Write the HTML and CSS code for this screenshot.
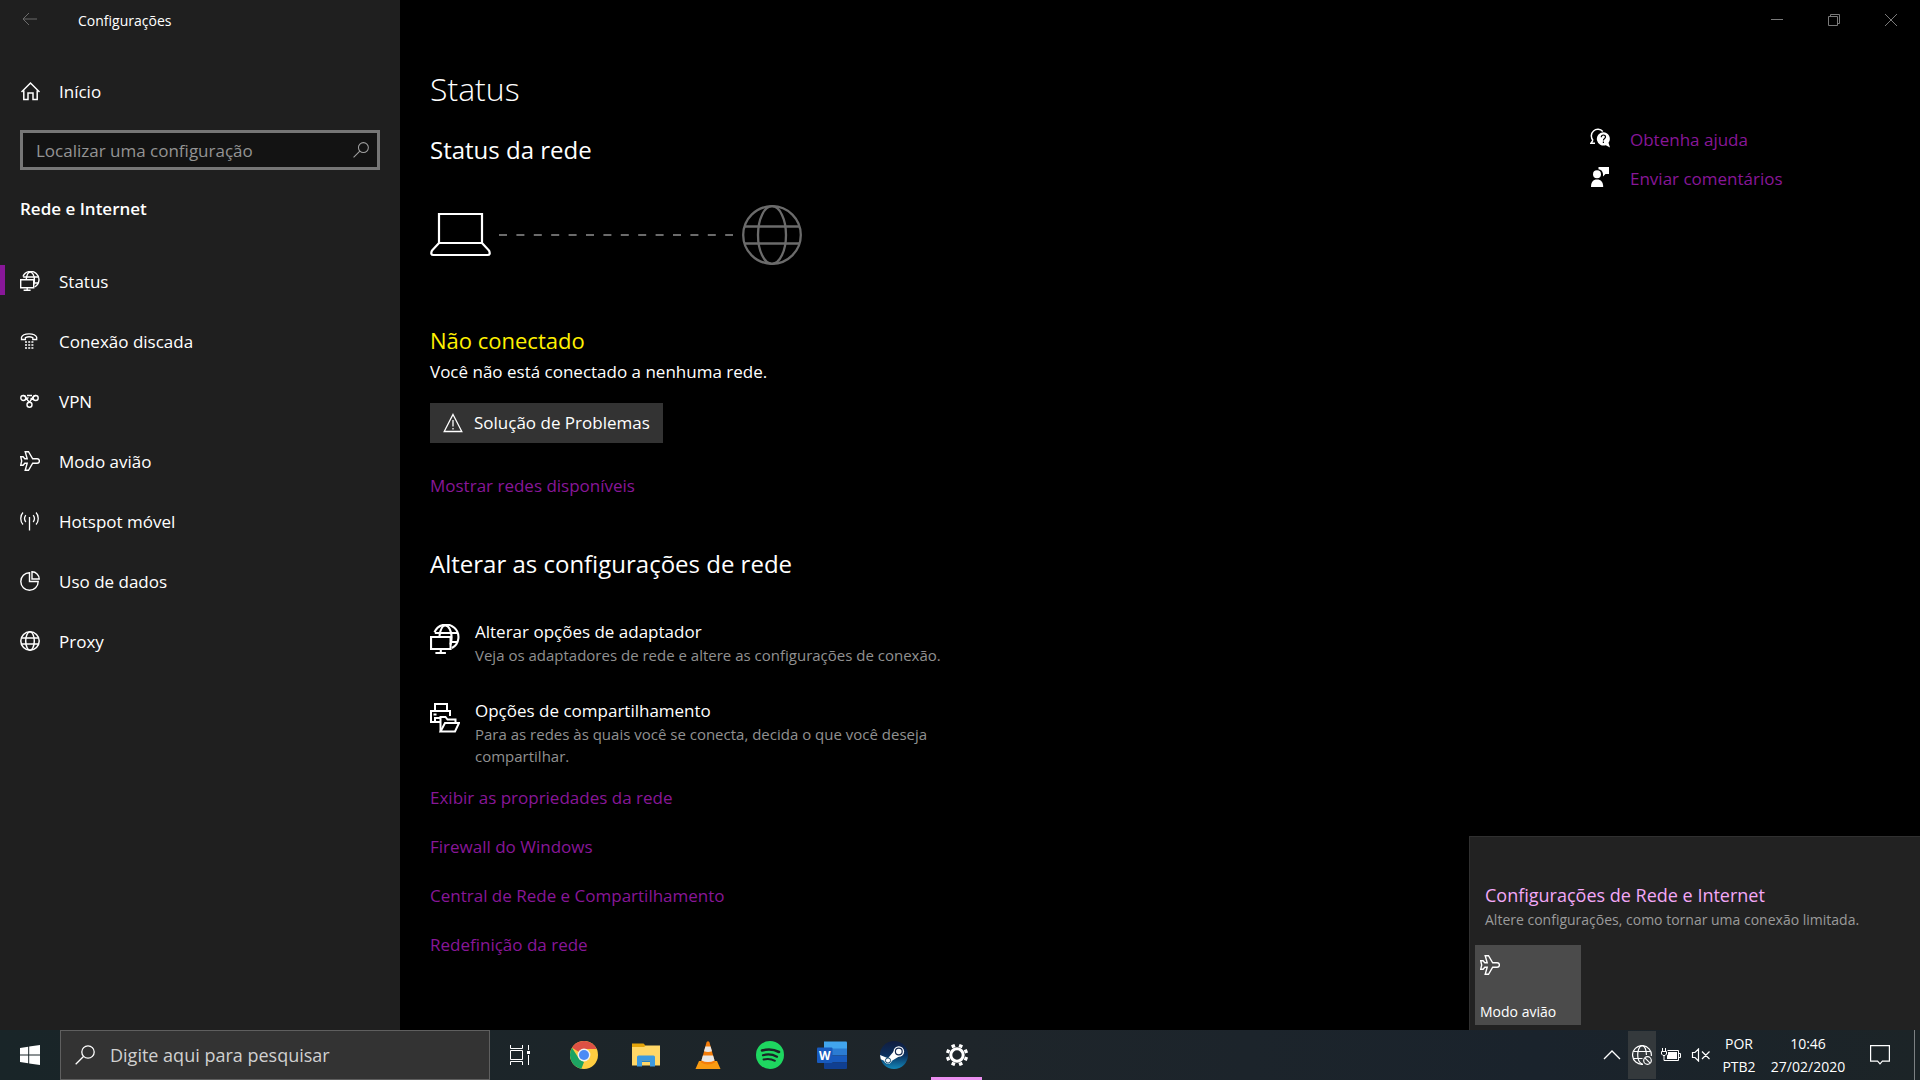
FILE: index.html
```html
<!DOCTYPE html>
<html lang="pt-BR">
<head>
    <meta charset="UTF-8">
    <meta name="viewport" content="width=device-width, initial-scale=1.0">
    <title>Configurações</title>
    <link rel="stylesheet" href="styles.css">
</head>
<body>
    <!-- Ícones usados mais de uma vez -->
    <svg class="sprite" aria-hidden="true">
        <symbol id="icon-globe" viewBox="0 0 20 20">
            <g fill="none" stroke="currentColor" stroke-width="1.5">
                <circle cx="10" cy="10" r="9.2"/>
                <ellipse cx="10" cy="10" rx="4.3" ry="9.2"/>
                <path d="M1.5 7h17M1.5 13h17"/>
            </g>
        </symbol>
        <symbol id="icon-network" viewBox="0 0 20 20">
            <g fill="none" stroke="currentColor" stroke-width="1.4">
                <path d="M3 5.500A8.300 8.300 0 1 1 14.600 16"/>
                <path d="M6.300 8C6.800 4.300 8 1 10.200 1s4.200 3.500 4.200 7.800c0 2-.3 3.700-.8 5"/>
                <path d="M3.200 6h14.800M14.300 12h4"/>
                <path d="M.7 8.700h13v8H.7zM7.200 17v2.300M3.600 19.300h7"/>
            </g>
        </symbol>
        <symbol id="icon-plane" viewBox="0 0 20 20">
            <path d="M5.200 .7h3.300l4.200 7.100h4.500a2.200 2.200 0 0 1 0 4.400h-4.500L8.500 19.300H5.200l2-7.100H4.800l-1.700 2.100H.7L1.700 10 .7 5.700h2.400l1.700 2.100h2.400z" fill="none" stroke="currentColor" stroke-width="1.4"/>
        </symbol>
        <symbol id="icon-search" viewBox="0 0 20 20">
            <g fill="none" stroke="currentColor" stroke-width="1.3">
                <circle cx="13" cy="7" r="6.200"/>
                <path d="M8.500 11.500L.7 19.300"/>
            </g>
        </symbol>
    </svg>

    <div class="window">
        <aside class="sidebar">
            <div class="title-bar">
                <button class="back-btn" aria-label="Voltar">
                    <svg width="16" height="14" viewBox="0 0 16 14"><path d="M15 7H1M7 1L1 7l6 6" fill="none" stroke="currentColor"/></svg>
                </button>
                <span class="window-title">Configurações</span>
            </div>
            <a href="#" class="nav-item home">
                <svg class="nav-icon" viewBox="0 0 20 20"><path d="M1.500 11L10.500 2 19.500 11M3.800 9.500V18.500H8V12h5v6.500h4.200V9.500" fill="none" stroke="currentColor" stroke-width="1.500"/></svg>
                <span>Início</span>
            </a>
            <div class="search-box">
                <input type="text" placeholder="Localizar uma configuração" aria-label="Localizar uma configuração">
                <svg class="search-icon"><use href="#icon-search"/></svg>
            </div>
            <h2 class="nav-heading">Rede e Internet</h2>
            <nav class="nav">
                <a href="#" class="nav-item active">
                    <svg class="nav-icon"><use href="#icon-network"/></svg>
                    <span>Status</span>
                </a>
                <a href="#" class="nav-item">
                    <svg class="nav-icon" viewBox="0 0 20 20">
                        <path d="M1.500 8.500V6.300C3 1.800 15 1.800 16.700 6.300v2.200h-3.900V6.700c-2-1-5.400-1-7.400 0v1.800z" fill="none" stroke="currentColor" stroke-width="1.300"/>
                        <path d="M5 11h2M8.200 11h2M11.400 11h2M5 14h2M8.200 14h2M11.400 14h2M5 17h2M8.200 17h2M11.400 17h2" stroke="currentColor" stroke-width="1.300"/>
                    </svg>
                    <span>Conexão discada</span>
                </a>
                <a href="#" class="nav-item">
                    <svg class="nav-icon" viewBox="0 0 20 20">
                        <g fill="none" stroke="currentColor" stroke-width="1.400">
                            <circle cx="3.300" cy="7" r="2.500"/>
                            <circle cx="15.700" cy="7" r="2.500"/>
                            <circle cx="9.500" cy="13.700" r="2.500"/>
                            <path d="M3.300 4.500c3 0 3.200 5 6.200 6.700M15.700 4.500c-4 0-4 6.500-7.700 7.200M5.500 8.700L8.500 6.500M13.500 8.700l-3-1.200M7 4.500h5"/>
                        </g>
                    </svg>
                    <span>VPN</span>
                </a>
                <a href="#" class="nav-item">
                    <svg class="nav-icon"><use href="#icon-plane"/></svg>
                    <span>Modo avião</span>
                </a>
                <a href="#" class="nav-item">
                    <svg class="nav-icon" viewBox="0 0 20 20">
                        <g fill="none" stroke="currentColor" stroke-width="1.300">
                            <path d="M3 1.500C0 4.500 0 10.500 3 13.500M16 1.500c3 3 3 9 0 12M5.800 4.200c-1.500 2-1.500 4.800 0 6.800M13.200 4.200c1.500 2 1.500 4.800 0 6.800"/>
                            <path d="M9.500 6v13.500"/>
                        </g>
                    </svg>
                    <span>Hotspot móvel</span>
                </a>
                <a href="#" class="nav-item">
                    <svg class="nav-icon" viewBox="0 0 20 20">
                        <g fill="none" stroke="currentColor" stroke-width="1.400">
                            <path d="M9.500 1.800A8.700 8.700 0 1 0 18.200 10.500H9.500z"/>
                            <path d="M12 .8v7.200h7.200A7.200 7.200 0 0 0 12 .8z"/>
                        </g>
                    </svg>
                    <span>Uso de dados</span>
                </a>
                <a href="#" class="nav-item">
                    <svg class="nav-icon"><use href="#icon-globe"/></svg>
                    <span>Proxy</span>
                </a>
            </nav>
        </aside>

        <main class="main">
            <div class="window-controls">
                <button aria-label="Minimizar"><svg width="12" height="12" viewBox="0 0 12 12"><path d="M0 5.500h12" stroke="currentColor"/></svg></button>
                <button aria-label="Restaurar"><svg width="12" height="12" viewBox="0 0 12 12"><path d="M.5 2.500h9v9h-9zM2.500 2.500v-2h9v9h-2" fill="none" stroke="currentColor"/></svg></button>
                <button aria-label="Fechar"><svg width="12" height="12" viewBox="0 0 12 12"><path d="M0 0l12 12M12 0L0 12" stroke="currentColor"/></svg></button>
            </div>
            <div class="columns">
                <div class="content">
                    <h1>Status</h1>
                    <h2>Status da rede</h2>
                    <div class="diagram">
                        <svg class="laptop" width="62" height="44" viewBox="0 0 62 44">
                            <path d="M9 1h43v29H9zM9 30L2 37.500Q0 42 3.500 42h54Q61 42 59 37.500L52 30" fill="none" stroke="currentColor" stroke-width="2.200"/>
                        </svg>
                        <svg class="dashes" width="234" height="2" viewBox="0 0 234 2"><path d="M0 1h234" stroke="currentColor" stroke-width="2" stroke-dasharray="8 9.400"/></svg>
                        <svg class="globe" width="60" height="60" viewBox="0 0 60 60">
                            <g fill="none" stroke="currentColor" stroke-width="2.300">
                                <circle cx="30" cy="30" r="28.800"/>
                                <ellipse cx="30" cy="30" rx="14" ry="28.800"/>
                                <path d="M2.500 21.500h55M2.500 38.500h55"/>
                            </g>
                        </svg>
                    </div>
                    <h3>Não conectado</h3>
                    <p class="status-text">Você não está conectado a nenhuma rede.</p>
                    <button class="troubleshoot-btn">
                        <svg width="20" height="20" viewBox="0 0 20 20"><path d="M10 1.500L18.800 18.500H1.200zM10 7v6.500M10 15v1.500" fill="none" stroke="currentColor" stroke-width="1.300"/></svg>
                        Solução de Problemas
                    </button>
                    <a href="#" class="link">Mostrar redes disponíveis</a>

                    <h2 class="change-heading">Alterar as configurações de rede</h2>
                    <a href="#" class="option">
                        <svg class="option-icon"><use href="#icon-network"/></svg>
                        <span class="option-text">
                            <span class="option-title">Alterar opções de adaptador</span>
                            <span class="option-desc">Veja os adaptadores de rede e altere as configurações de conexão.</span>
                        </span>
                    </a>
                    <a href="#" class="option">
                        <svg class="option-icon" viewBox="0 0 30 30">
                            <g fill="none" stroke="currentColor" stroke-width="2">
                                <path d="M5 8V1h12v7M10 19H1V8h19v5"/>
                                <path d="M5 19v-4h6M3.500 11.500h3"/>
                                <path d="M10.500 28.500V14h5l2 2.500h8V20"/>
                                <path d="M10.500 28.500L15 20h14l-4 8.500z"/>
                            </g>
                        </svg>
                        <span class="option-text">
                            <span class="option-title">Opções de compartilhamento</span>
                            <span class="option-desc">Para as redes às quais você se conecta, decida o que você deseja compartilhar.</span>
                        </span>
                    </a>
                    <div class="link-list">
                        <a href="#" class="link">Exibir as propriedades da rede</a>
                        <a href="#" class="link">Firewall do Windows</a>
                        <a href="#" class="link">Central de Rede e Compartilhamento</a>
                        <a href="#" class="link">Redefinição da rede</a>
                    </div>
                </div>
                <div class="help">
                    <a href="#" class="help-link">
                        <svg width="20" height="20" viewBox="0 0 20 20">
                            <path d="M3 12.200A6.200 6.200 0 1 1 12.800 3.500M3 12.200L.8 15.300H5" fill="none" stroke="#fff" stroke-width="1.500"/>
                            <path d="M13.200 4.200a6.600 6.600 0 0 1 5.300 10.500l1.500 4.800-4.200-2.300A6.700 6.700 0 1 1 13.200 4.200z" fill="#fff"/>
                            <path d="M11.300 9.200c0-3 4.200-2.800 4.200-.3 0 1.600-2.100 1.700-2.100 3.600M13.400 13.500v1.500" fill="none" stroke="#000" stroke-width="1.200"/>
                        </svg>
                        Obtenha ajuda
                    </a>
                    <a href="#" class="help-link">
                        <svg width="20" height="20" viewBox="0 0 20 20" fill="#fff">
                            <path d="M8.500 0H19v7h-3.500L13 9.500V7C12.500 4 11 2.500 8.500 2.300z"/>
                            <circle cx="7" cy="7.300" r="4"/>
                            <path d="M1 20c0-5 2-7.500 6-7.500s6.200 2.500 6.200 7.500z"/>
                        </svg>
                        Enviar comentários
                    </a>
                </div>
            </div>
        </main>

        <!-- Painel de rede aberto pela bandeja -->
        <section class="flyout">
            <a href="#" class="flyout-link">Configurações de Rede e Internet</a>
            <p>Altere configurações, como tornar uma conexão limitada.</p>
            <button class="tile">
                <svg><use href="#icon-plane"/></svg>
                Modo avião
            </button>
        </section>
    </div>

    <footer class="taskbar">
        <button class="start-btn" aria-label="Iniciar">
            <svg width="20" height="20" viewBox="0 0 20 20" fill="#fff"><path d="M0 2.900l8.200-1.200v7.800H0zM9.200 1.500L20 0v9.500H9.200zM0 10.500h8.200v7.800L0 17.100zM9.200 10.500H20V20L9.200 18.500z"/></svg>
        </button>
        <div class="task-search">
            <svg><use href="#icon-search"/></svg>
            <input type="text" placeholder="Digite aqui para pesquisar" aria-label="Digite aqui para pesquisar">
        </div>
        <button class="app task-view" aria-label="Visão de tarefas">
            <svg width="20" height="20" viewBox="0 0 20 20"><path d="M.5 0v3.500h12V0M.5 5.500h12v9H.5zM.5 20v-3.500h12V20M18.500 0v5M18.500 10v10" fill="none" stroke="#fff"/><path d="M17 6h3v3h-3z" fill="#fff"/></svg>
        </button>
        <div class="apps">
            <button class="app" aria-label="Google Chrome">
                <svg width="28" height="28" viewBox="0 0 28 28">
                    <circle cx="14" cy="14" r="14" fill="#ffcd41"/>
                    <path d="M14 14L2 6.800A14 14 0 0 1 26.600 8H14z" fill="#dd5144"/>
                    <path d="M2 6.800L8.700 17.200 14 21l-2.600 6.800A14 14 0 0 1 2 6.800z" fill="#1da462"/>
                    <circle cx="14" cy="14" r="6.400" fill="#f1f1f1"/>
                    <circle cx="14" cy="14" r="5" fill="#4c8bf5"/>
                </svg>
            </button>
            <button class="app" aria-label="Explorador de Arquivos">
                <svg width="28" height="28" viewBox="0 0 28 28">
                    <path d="M0 2.500h11.500l2 2V9H0z" fill="#e5a50a"/>
                    <path d="M0 6h12l1.800-1.500H28V24.500H0z" fill="#ffd767"/>
                    <path d="M5 25.500V16q0-1.500 1.500-1.500h15q1.500 0 1.500 1.500v9.500h-5v-6h-8v6z" fill="#3c9ae0"/>
                    <path d="M10 19.500h8v1.500h-8z" fill="#257fc4"/>
                </svg>
            </button>
            <button class="app" aria-label="VLC">
                <svg width="28" height="28" viewBox="0 0 28 28">
                    <path d="M5 20h18l3.500 8h-25z" fill="#f99b12"/>
                    <path d="M12.600 1q1.400-1.500 2.800 0l5.600 20.500q-7 4-14 0z" fill="#f47d09"/>
                    <path d="M11.400 5.500h5.200l1.400 4.700q-4 1.500-8 0zM8.900 14.500h10.200l1.500 5q-6.600 3-13.200 0z" fill="#e8e8e8"/>
                </svg>
            </button>
            <button class="app" aria-label="Spotify">
                <svg width="28" height="28" viewBox="0 0 28 28">
                    <circle cx="14" cy="14" r="14" fill="#1ed760"/>
                    <g fill="none" stroke="#1b2427" stroke-linecap="round"><path d="M6 9.500q9.500-2.500 17 1.500" stroke-width="2.600"/><path d="M7 14.200q7.500-2 14 1.500" stroke-width="2.200"/><path d="M7.500 18.500q6.500-1.500 11.500 1.400" stroke-width="1.800"/></g>
                </svg>
            </button>
            <button class="app" aria-label="Word">
                <svg width="30" height="28" viewBox="0 0 30 28">
                    <path d="M7 .5h22a1 1 0 0 1 1 1V8H7z" fill="#41a5ee"/>
                    <path d="M7 7.500h23v7H7z" fill="#2b7cd3"/>
                    <path d="M7 14.500h23v7H7z" fill="#185abd"/>
                    <path d="M7 21.500h23V27a1 1 0 0 1-1 1H8a1 1 0 0 1-1-1z" fill="#103f91"/>
                    <rect y="6.500" width="15.500" height="15.500" rx="1" fill="#185abd"/>
                    <text x="7.700" y="18.500" class="word-letter">W</text>
                </svg>
            </button>
            <button class="app" aria-label="Steam">
                <svg width="28" height="28" viewBox="0 0 28 28">
                    <defs><linearGradient id="steam" x2="0" y2="1"><stop offset="0" stop-color="#111d3e"/><stop offset=".5" stop-color="#0a2f5e"/><stop offset="1" stop-color="#1387b8"/></linearGradient></defs>
                    <circle cx="14" cy="14" r="14" fill="url(#steam)"/>
                    <path d="M0 14l8 3.200L14 10l5 5.500-7 4.200q-1.500 3.700-5 3-2.200-.7-3-3L.8 18.200z" fill="#fff"/>
                    <circle cx="18.800" cy="10.500" r="5.300" fill="#fff"/>
                    <circle cx="18.800" cy="10.500" r="3.400" fill="#fff" stroke="#15294f" stroke-width="1.200"/>
                    <circle cx="8" cy="19.500" r="2.600" fill="none" stroke="#15496f"/>
                </svg>
            </button>
            <button class="app open" aria-label="Configurações">
                <svg width="22" height="22" viewBox="0 0 22 22">
                    <circle cx="11" cy="11" r="6.200" fill="none" stroke="#fff" stroke-width="3"/>
                    <path d="M18.400 14.100l3 1.200M14.100 18.400l1.200 3M7.900 18.400l-1.200 3M3.600 14.100l-3 1.200M3.600 7.900l-3-1.200M7.900 3.600L6.700.6M14.100 3.600l1.200-3M18.400 7.900l3-1.200" stroke="#fff" stroke-width="3.600"/>
                </svg>
            </button>
        </div>
        <div class="tray">
            <button class="tray-btn chevron" aria-label="Mostrar ícones ocultos">
                <svg width="18" height="10" viewBox="0 0 18 10"><path d="M1 9l8-8 8 8" fill="none" stroke="#fff" stroke-width="1.300"/></svg>
            </button>
            <button class="tray-btn pressed" aria-label="Rede">
                <svg width="20" height="20" viewBox="0 0 20 20">
                    <g fill="none" stroke="#fff" stroke-width="1.200">
                        <path d="M11 19.300A9.400 9.400 0 1 1 19.300 11"/>
                        <path d="M10.500 19.300C7.500 18 5.700 14 5.700 10S7 1 10 .6s4.400 5 4.400 9.400M1.500 6.500h17M1.500 13.500h9"/>
                        <circle cx="15.500" cy="15.500" r="3.800"/>
                        <path d="M12.800 12.800l5.400 5.400"/>
                    </g>
                </svg>
            </button>
            <button class="tray-btn" aria-label="Bateria">
                <svg width="20" height="14" viewBox="0 0 20 14">
                    <path d="M6.500 2.500h11v10h-12M17.500 5.500h2v4h-2M1.500 0v3M4.500 0v3M.5 3.500h5V6L4 7.500H2L.5 6zM3 7v5.500h3" fill="none" stroke="#fff"/>
                    <path d="M7 4h9v7H6V7.500l1-1z" fill="#fff"/>
                </svg>
            </button>
            <button class="tray-btn" aria-label="Volume">
                <svg width="20" height="14" viewBox="0 0 20 14"><path d="M1.500 4.500H4L7.500 1v12L4 9.500H1.500zM11 3.500l7.500 7.500M18.500 3.500L11 11" fill="none" stroke="#fff" stroke-width="1.200"/></svg>
            </button>
            <button class="language">POR<br>PTB2</button>
            <button class="clock">10:46<br>27/02/2020</button>
            <button class="notifications" aria-label="Central de ações">
                <svg width="20" height="20" viewBox="0 0 20 20"><path d="M.6.600h18.800v15.600h-7L10 18.800 7.600 16.200h-7z" fill="none" stroke="#fff" stroke-width="1.200"/></svg>
            </button>
            <button class="show-desktop" aria-label="Mostrar área de trabalho"></button>
        </div>
    </footer>
</body>
</html>
```

FILE: styles.css
```css
* {
    box-sizing: border-box;
}
body {
    font-family: "Segoe UI", "Open Sans", sans-serif;
    font-size: 17px;
    line-height: 24px;
    margin: 0;
    height: 100vh;
    display: flex;
    flex-direction: column;
    overflow: hidden;
    background-color: #000;
    color: #fff;
}
h1, h2, h3, p {
    margin: 0;
    font-weight: normal;
}
a {
    color: inherit;
    text-decoration: none;
}
button, input {
    font: inherit;
    color: inherit;
    background: none;
    border: none;
    padding: 0;
    margin: 0;
    outline: none;
}
svg {
    display: block;
    flex-shrink: 0;
}
.sprite {
    position: absolute;
    width: 0;
    height: 0;
}
.window {
    position: relative;
    flex: 1;
    min-height: 0;
    display: flex;
}

/* Barra lateral */
.sidebar {
    width: 400px;
    flex-shrink: 0;
    background-color: #1f1f1f;
}
.title-bar {
    display: flex;
    align-items: center;
    height: 40px;
    font-size: 14px;
}
.back-btn {
    display: flex;
    padding: 0 40px 2px 22px;
    color: #6b6b6b;
}
.window-title {
    padding-top: 2px;
}
.nav-item {
    position: relative;
    display: flex;
    align-items: center;
    gap: 19px;
    height: 60px;
    padding-left: 20px;
}
.nav-item span {
    padding-top: 2px;
}
.nav-icon {
    width: 20px;
    height: 20px;
}
.home {
    margin-top: 21px;
}
.search-box {
    display: flex;
    align-items: center;
    height: 40px;
    margin: 9px 20px 0;
    padding: 0 8px 0 13px;
    background-color: #131313;
    border: 3px solid #767676;
}
.search-box input {
    flex: 1;
    min-width: 0;
    padding-top: 2px;
}
.search-box input::placeholder {
    color: #949494;
    opacity: 1;
}
.search-icon {
    width: 16px;
    height: 16px;
    color: #a0a0a0;
}
.nav-heading {
    margin: 27px 20px 30px;
    font-size: 17px;
    font-weight: 600;
}
.nav-item.active::before {
    content: "";
    position: absolute;
    left: 0;
    top: 14px;
    width: 5px;
    height: 30px;
    background-color: #881798;
}

/* Conteúdo */
.main {
    flex: 1;
    min-width: 0;
}
.window-controls {
    display: flex;
    justify-content: flex-end;
    height: 40px;
    padding-right: 1px;
    color: #7a7a7a;
}
.window-controls button {
    display: flex;
    align-items: center;
    justify-content: center;
    width: 57px;
}
.columns {
    display: flex;
    justify-content: space-between;
    padding-left: 30px;
}
.content {
    width: 540px;
    padding-top: 27px;
}
h1 {
    font-size: 32px;
    line-height: 44px;
    font-weight: 300;
}
.content h2 {
    margin-top: 23px;
    font-size: 24px;
    line-height: 32px;
}
.diagram {
    display: flex;
    align-items: center;
    gap: 7px;
    margin-top: 39px;
    color: #6b6b6b;
}
.laptop {
    color: #fff;
}
.globe {
    margin-left: 2px;
}
h3 {
    margin-top: 60px;
    font-size: 22px;
    line-height: 30px;
    color: #fff100;
}
.status-text {
    margin-top: 5px;
}
.troubleshoot-btn {
    display: flex;
    align-items: center;
    gap: 11px;
    height: 40px;
    margin: 19px 0 31px;
    padding: 0 13px;
    background-color: #333;
}
.link {
    display: block;
    color: #881798;
}
.content .change-heading {
    margin: 50px 0 40px;
}
.option {
    display: flex;
    gap: 15px;
    margin-bottom: 33px;
}
.option-icon {
    width: 30px;
    height: 30px;
    margin-top: 4px;
}
.option-title, .option-desc {
    display: block;
}
.option-desc {
    width: 480px;
    font-size: 15px;
    line-height: 22px;
    color: #919191;
}
.link-list {
    display: flex;
    flex-direction: column;
    gap: 25px;
    margin-top: -14px;
}
.help {
    display: flex;
    flex-direction: column;
    gap: 15px;
    width: 330px;
    padding-top: 88px;
}
.help-link {
    display: flex;
    gap: 20px;
    color: #881798;
}

/* Painel de rede */
.flyout {
    position: absolute;
    right: 0;
    bottom: 0;
    width: 451px;
    padding: 46px 5px 5px;
    background-color: #222;
    border: 1px solid #303030;
    border-width: 1px 0 0 1px;
}
.flyout-link {
    display: block;
    margin-left: 10px;
    font-size: 18px;
    color: #f3a8f8;
}
.flyout p {
    margin: 1px 0 13px 10px;
    font-size: 14px;
    color: #9b9b9b;
}
.tile {
    display: flex;
    flex-direction: column;
    justify-content: space-between;
    width: 106px;
    height: 80px;
    padding: 10px 5px 1px;
    font-size: 14px;
    text-align: left;
    background-color: #4b4b4b;
}
.tile svg {
    width: 20px;
    height: 20px;
}

/* Barra de tarefas */
.taskbar {
    display: flex;
    height: 50px;
    flex-shrink: 0;
    background: linear-gradient(to right, #192528, #1e252a 50%, #1a232c 80%, #1c2427);
}
.taskbar button {
    display: flex;
    align-items: center;
    justify-content: center;
}
.start-btn {
    width: 60px;
}
.task-search {
    display: flex;
    align-items: center;
    gap: 15px;
    width: 430px;
    padding-left: 14px;
    font-size: 18px;
    background-color: #333;
    border: 1px solid #5f5f5f;
}
.task-search svg {
    width: 20px;
    height: 20px;
}
.task-search input {
    flex: 1;
}
.task-search input::placeholder {
    color: #d0d0d0;
    opacity: 1;
}
.app {
    width: 62px;
}
.app.task-view {
    width: 60px;
}
.apps {
    display: flex;
    padding-left: 3px;
}
.app.open {
    border-bottom: 3px solid #ea8ff0;
    border-top: 3px solid transparent;
    width: 51px;
    margin-left: 6px;
}
.word-letter {
    font-size: 12px;
    font-weight: 700;
    fill: #fff;
    text-anchor: middle;
}
.tray {
    display: flex;
    margin-left: auto;
}
.tray-btn {
    width: 30px;
}
.tray-btn.chevron {
    width: 32px;
}
.tray-btn.pressed {
    width: 28px;
    margin: 1px 0;
    background-color: #34393c;
}
.language, .clock {
    font-size: 14px;
    line-height: 23px;
}
.language {
    width: 46px;
}
.clock {
    width: 92px;
}
.notifications {
    width: 52px;
}
.taskbar .show-desktop {
    width: 6px;
    margin-left: 8px;
    border-left: 1px solid #7c8183;
}
```
